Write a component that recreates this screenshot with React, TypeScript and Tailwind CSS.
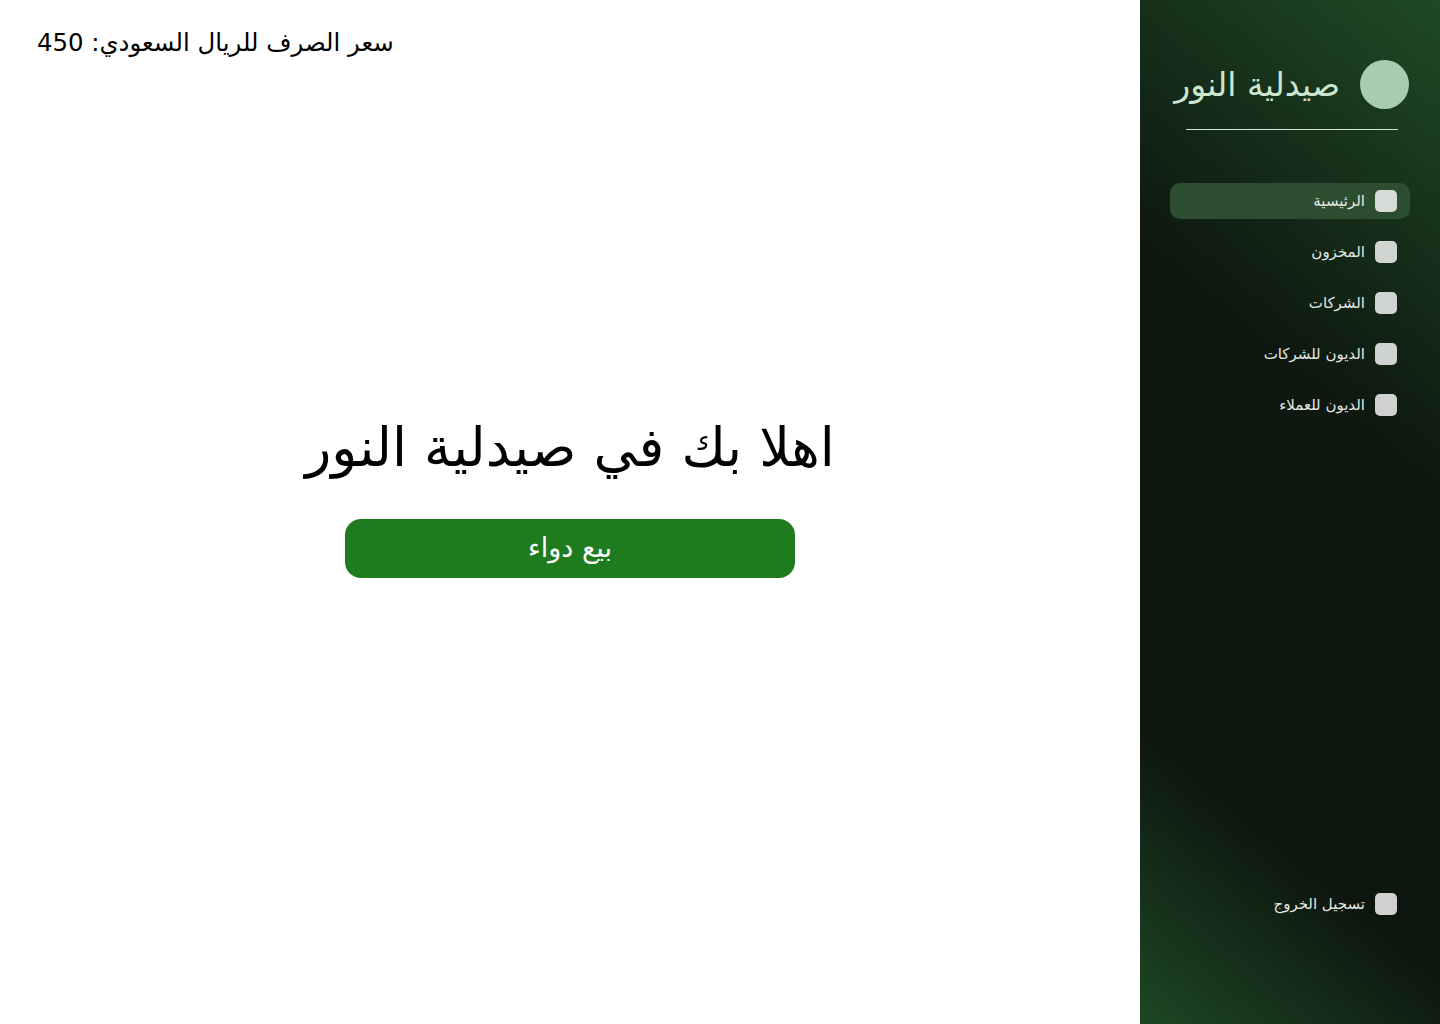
import React from "react";

const font = { fontFamily: '"DejaVu Sans", "Noto Sans", sans-serif' };

function NavItem({ label, active }: { label: string; active?: boolean }) {
  return (
    <div
      className={`flex items-center gap-[10px] h-[36px] px-[13px] rounded-[10px] ${active ? "bg-[#2d4d30]" : ""}`}
    >
      <div className="w-[22px] h-[22px] rounded-[5px] bg-white/80 shrink-0" />
      <span className="text-[15px] text-[#e3e8e3] whitespace-nowrap">{label}</span>
    </div>
  );
}

export default function App() {
  return (
    <div dir="rtl" className="flex w-full h-[1024px] bg-white" style={font}>
      <aside className="w-[300px] h-full shrink-0 flex flex-col px-[30px] pt-[60px] pb-[102px] bg-[linear-gradient(220deg,#1f4a25_0%,#0e1810_38%,#0d150f_76%,#1d4724_100%)]">
        <div className="flex items-center gap-[20px] pr-[1px]">
          <div className="w-[49px] h-[49px] rounded-full bg-[#a9cbb0] shrink-0" />
          <span className="text-[33px] leading-none text-[#cde6d0] whitespace-nowrap">صيدلية النور</span>
        </div>
        <div className="mt-[20px] ml-[16px] mr-[12px] h-px bg-[#cfe6d2]" />
        <nav className="mt-[53px] flex flex-col gap-[15px]">
          <NavItem label="الرئيسية" active />
          <NavItem label="المخزون" />
          <NavItem label="الشركات" />
          <NavItem label="الديون للشركات" />
          <NavItem label="الديون للعملاء" />
        </nav>
        <div className="mt-auto">
          <NavItem label="تسجيل الخروج" />
        </div>
      </aside>
      <main className="flex-1 flex flex-col">
        <div className="flex justify-end px-[37px] pt-[26px]">
          <span className="text-[24.4px] text-black leading-[34px] whitespace-nowrap">سعر الصرف للريال السعودي: 450</span>
        </div>
        <div className="flex-1 flex flex-col items-center pt-[348px]">
          <h1 className="text-[54px] leading-[80px] text-black whitespace-nowrap">اهلا بك في صيدلية النور</h1>
          <button className="mt-[31px] w-[450px] h-[59px] rounded-[16px] bg-[#1e7b1e] text-white text-[27px]">
            بيع دواء
          </button>
        </div>
      </main>
    </div>
  );
}
